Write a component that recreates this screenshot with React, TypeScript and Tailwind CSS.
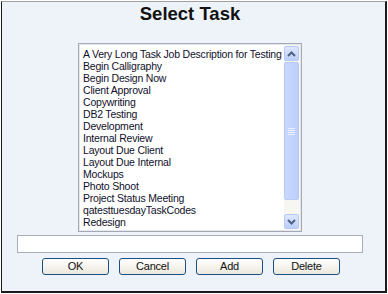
import React from "react";

const items = [
  "A Very Long Task Job Description for Testing",
  "Begin Calligraphy",
  "Begin Design Now",
  "Client Approval",
  "Copywriting",
  "DB2 Testing",
  "Development",
  "Internal Review",
  "Layout Due Client",
  "Layout Due Internal",
  "Mockups",
  "Photo Shoot",
  "Project Status Meeting",
  "qatesttuesdayTaskCodes",
  "Redesign",
];

const font = { fontFamily: '"Liberation Sans", Arial, sans-serif' };

function Btn({ label }: { label: string }) {
  return (
    <button
      className="w-[67px] h-[17px] rounded-[3px] border border-[#1c4f86] bg-gradient-to-b from-white to-[#ebe8dc] text-[11px] leading-[15px] tracking-[-0.2px] text-[#111] flex items-center justify-center"
      style={font}
    >
      {label}
    </button>
  );
}

export default function App() {
  return (
    <div className="w-[388px] h-[294px] bg-white p-[1px]" style={font}>
      <div className="w-[386px] h-[292px] bg-[#eef3fa] border-l border-t border-r-2 border-b-2 border-l-[#1a1a1a] border-t-[#a0a0a0] border-r-[#1a1a1a] border-b-[#1a1a1a] flex flex-col">
        <div className="ml-[15px] w-[346px] mt-[1px] text-center text-[18.5px] leading-[22px] font-bold text-[#111]">
          Select Task
        </div>
        <div className="ml-[76px] mt-[18px] w-[224px] h-[189px] border border-[#a3a9b1] bg-white">
          <div className="w-full h-full border border-[#e4e8ee] flex overflow-hidden">
            <div className="flex-1 pl-[3px] pt-[3px] text-[10.5px] leading-[12px] tracking-[-0.2px] text-[#10102a] whitespace-nowrap overflow-hidden">
              {items.map((t) => (
                <div key={t}>{t}</div>
              ))}
            </div>
            <div className="w-[16px] h-full flex flex-col bg-[#f7f6f1] py-[1px] pr-[1px]">
              <div className="h-[15px] w-[15px] rounded-[2px] border border-[#b6c9f4] bg-gradient-to-b from-[#dde7fe] to-[#bccffb] flex items-center justify-center">
                <svg width="9" height="6" viewBox="0 0 9 6">
                  <path d="M1 5 L4.5 1.5 L8 5" fill="none" stroke="#4d6185" strokeWidth="2" />
                </svg>
              </div>
              <div className="mt-[1px] h-[138px] w-[15px] rounded-[2px] border border-[#b6c9f4] bg-gradient-to-r from-[#c9d8fd] to-[#bccffb] flex items-center justify-center">
                <div className="flex flex-col gap-[1px]">
                  <div className="w-[7px] h-[1px] bg-[#e9effd]" />
                  <div className="w-[7px] h-[1px] bg-[#e9effd]" />
                  <div className="w-[7px] h-[1px] bg-[#e9effd]" />
                  <div className="w-[7px] h-[1px] bg-[#e9effd]" />
                </div>
              </div>
              <div className="flex-1" />
              <div className="h-[15px] w-[15px] rounded-[2px] border border-[#b6c9f4] bg-gradient-to-b from-[#dde7fe] to-[#bccffb] flex items-center justify-center">
                <svg width="9" height="6" viewBox="0 0 9 6">
                  <path d="M1 1 L4.5 4.5 L8 1" fill="none" stroke="#4d6185" strokeWidth="2" />
                </svg>
              </div>
            </div>
          </div>
        </div>
        <div className="ml-[15px] mt-[3px] w-[346px] h-[18px] border border-[#a6adb6] bg-white" />
        <div className="ml-[40px] mt-[5px] flex gap-[10px]">
          <Btn label="OK" />
          <Btn label="Cancel" />
          <Btn label="Add" />
          <Btn label="Delete" />
        </div>
      </div>
    </div>
  );
}
